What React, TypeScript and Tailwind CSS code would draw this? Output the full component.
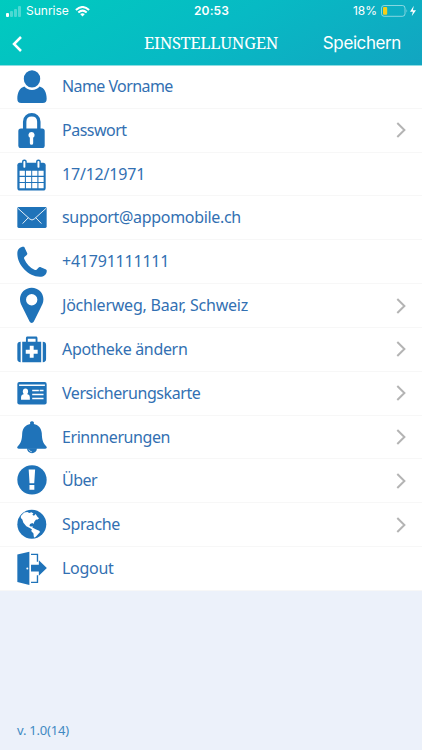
import React from 'react';

interface IconProps {
  children: React.ReactNode;
}

interface SettingsRow {
  label: string;
  icon: React.ReactNode;
  textClass: string;
  hasArrow?: boolean;
}

const RowIcon: React.FC<IconProps> = ({ children }) => (
  <svg viewBox="0 0 32 43.83" className="h-full w-8 shrink-0 fill-[#1f73b9]" aria-hidden="true">
    {children}
  </svg>
);

const rows: SettingsRow[] = [
  {
    label: 'Name Vorname',
    textClass: 'tracking-[-0.58px]',
    icon: (
      <>
        <path d="M8.2 22C10.2 24.4 12.8 25.5 16 25.5S21.8 24.4 23.8 22C28.6 23.3 31 28.3 31 34.6C31 37.8 29.8 39 27 39H5C2.2 39 1 37.8 1 34.6C1 28.3 3.4 23.3 8.2 22Z" />
        <ellipse cx="16" cy="14.6" rx="9" ry="9.4" fill="#fff" />
        <ellipse cx="16" cy="14.2" rx="8.4" ry="8.8" />
      </>
    ),
  },
  {
    label: 'Passwort',
    textClass: 'tracking-[-0.5px]',
    hasArrow: true,
    icon: (
      <>
        <path d="M8.5 21V13C8.5 3.5 23 3.5 23 13V21" fill="none" stroke="#1f73b9" strokeWidth="3.5" />
        <rect x="2" y="20" width="27" height="20" rx="2.6" />
        <path d="M15.5 23.6a3.2 3.2 0 0 1 1.7 5.9V35a1.7 1.7 0 0 1-3.4 0v-5.5a3.2 3.2 0 0 1 1.7-5.9Z" fill="#fff" />
      </>
    ),
  },
  {
    label: '17/12/1971',
    textClass: 'tracking-[-0.2px]',
    icon: (
      <>
        <rect x="1" y="10" width="29" height="28.5" rx="2.6" />
        <path
          d="M3.3 18.2h5.4v5.2H3.3zM9.8 18.2h5.4v5.2H9.8zM16.2 18.2h5.3v5.2h-5.3zM22.6 18.2h5.3v5.2h-5.3zM3.3 24.5h5.4v5.2H3.3zM9.8 24.5h5.4v5.2H9.8zM16.2 24.5h5.3v5.2h-5.3zM22.6 24.5h5.3v5.2h-5.3zM3.3 30.8h5.4v5.2H3.3zM9.8 30.8h5.4v5.2H9.8zM16.2 30.8h5.3v5.2h-5.3zM22.6 30.8h5.3v5.2h-5.3z"
          fill="#fff"
        />
        <rect x="5.8" y="6.6" width="4.8" height="9" rx="2.2" />
        <rect x="20.2" y="6.6" width="4.8" height="9" rx="2.2" />
        <rect x="7.2" y="8.3" width="2" height="6.8" rx="0.8" fill="#fff" />
        <rect x="21.6" y="8.3" width="2" height="6.8" rx="0.8" fill="#fff" />
      </>
    ),
  },
  {
    label: 'support@appomobile.ch',
    textClass: 'tracking-[-0.32px]',
    icon: (
      <>
        <rect x="1" y="11.3" width="30" height="21.4" rx="1.4" />
        <path
          d="M1.6 12.6 13.8 23.6Q16 25.5 18.2 23.6L30.4 12.6M6.4 28.2 12.2 22.2M25.6 28.2 19.8 22.2"
          fill="none"
          stroke="#fff"
          strokeWidth="0.9"
        />
      </>
    ),
  },
  {
    label: '+41791111111',
    textClass: 'tracking-[-0.22px]',
    icon: (
      <path d="M2.6 9C4.1 7.6 5.8 7 7 7C8 7 8.3 7.5 8.7 8.5L11 13.2C11.5 14.3 11.2 15 10.3 15.7L8.5 17.1C7.8 17.8 7.7 18.4 8.1 19.4C10.3 24.6 14 28.2 18.5 30.4C19.5 30.9 20.2 30.8 20.9 30.1L22.6 28.3C23.3 27.5 24 27.3 25 27.8L29.8 30C30.8 30.5 31.2 31 31.1 31.9C30.9 35.3 28.1 37.6 24.1 37.6C12.4 37.4 1 25.6 1 14.1C1 12 1.3 10.4 2.6 9Z" />
    ),
  },
  {
    label: 'Jöchlerweg, Baar, Schweiz',
    textClass: 'tracking-[-0.23px]',
    hasArrow: true,
    icon: (
      <path
        fillRule="evenodd"
        d="M15.7 3.8C22.4 3.8 27.7 9 27.7 15.6C27.7 19 26.2 21.7 24.5 25L18 38.2C16.9 40.4 14.5 40.4 13.4 38.2L6.9 25C5.2 21.7 3.7 19 3.7 15.6C3.7 9 9 3.8 15.7 3.8ZM15.7 10.3A5.8 5.8 0 1 0 15.7 21.9A5.8 5.8 0 1 0 15.7 10.3Z"
      />
    ),
  },
  {
    label: 'Apotheke ändern',
    textClass: 'tracking-[-0.33px]',
    hasArrow: true,
    icon: (
      <>
        <path d="M4.4 14V35C2 35 1 34 1 31.8V17.2C1 15 2 14 4.4 14ZM27 14C29.3 14 30.4 15 30.4 17.2V31.8C30.4 34 29.3 35 27 35Z" />
        <path
          fillRule="evenodd"
          d="M6 14H9.8V10.4C9.8 9.4 10.4 8.8 11.4 8.8H20C21 8.8 21.6 9.4 21.6 10.4V14H25.4V35H6ZM11.7 11V14H19.7V11Z"
        />
        <path d="M13.7 18.2h4v4.1h4.1v4h-4.1v4.1h-4v-4.1H9.6v-4h4.1z" fill="#fff" />
      </>
    ),
  },
  {
    label: 'Versicherungskarte',
    textClass: 'tracking-[-0.43px]',
    hasArrow: true,
    icon: (
      <>
        <rect x="1" y="10.2" width="30" height="23" rx="2" />
        <g fill="#fff">
          <rect x="2.8" y="12.8" width="26.4" height="1.5" />
          <ellipse cx="9.3" cy="19.9" rx="2.7" ry="3.1" />
          <path d="M4.8 28.4V26.2C4.8 24 6 23 7.8 22.6H10.8C12.6 23 13.8 24 13.8 26.2V28.4Z" />
          <path d="M16.2 18.2H23v1.5H16.2zM23.8 18.2H27.8v1.5H23.8zM16.2 22.2H27.8v1.5H16.2zM16.2 26.3H27.8v1.5H16.2z" />
        </g>
      </>
    ),
  },
  {
    label: 'Erinnnerungen',
    textClass: 'tracking-[-0.42px]',
    hasArrow: true,
    icon: (
      <>
        <path d="M16 5.3A1.9 1.9 0 0 1 17.8 8.1C22.5 9 25.6 12.5 26 17.5C26.3 24.5 27 27.4 30.3 30.7C31.9 32.2 31.2 33.4 29.3 33.4H2.7C.8 33.4 .1 32.2 1.7 30.7C5 27.4 5.7 24.5 6 17.5C6.4 12.5 9.5 9 14.2 8.1A1.9 1.9 0 0 1 16 5.3Z" />
        <path d="M10.9 33A5.1 5.1 0 0 0 21.1 33Z" />
        <path d="M12.7 34.2Q13.5 36.5 16 36.7" fill="none" stroke="#fff" strokeWidth="0.6" />
      </>
    ),
  },
  {
    label: 'Über',
    textClass: 'tracking-[-0.5px]',
    hasArrow: true,
    icon: (
      <>
        <circle cx="16" cy="21.3" r="15" />
        <path d="M12.6 10.7H19.2L18.3 24.7H13.5ZM13.4 26.6H18.4V31.4H13.4Z" fill="#fff" />
      </>
    ),
  },
  {
    label: 'Sprache',
    textClass: 'tracking-[-0.35px]',
    hasArrow: true,
    icon: (
      <>
        <circle cx="15.8" cy="21.7" r="14.8" />
        <path
          d="M4.6 13.3L8 9.7L11.3 9.2L13.2 10.2L15.4 9.5L17.5 10.8L16.3 12L18 13L19.7 11.3L21.7 14.2L23.3 15.5L21.3 17.1L20.2 17L18.4 19.2L17.6 21.4L16.4 20.5L14 21.4L13.4 23.3L15 24.3L16.6 23.5L16.4 25.2L18.3 26.2L20.2 27L23.4 28.3L24.2 29.7L22.2 32L20.6 33.7L18.7 35.5L17.8 34.2L17.5 31.2L15.2 28.6L15.9 26.8L13.7 25.6L10.2 23.7L7.2 20.3L6.1 16.9L4.6 15.4Z"
          fill="#fff"
        />
      </>
    ),
  },
  {
    label: 'Logout',
    textClass: 'tracking-[-0.3px]',
    icon: (
      <>
        <path d="M1 7.8 13.3 4.9V38.9L1 35.9Z" />
        <circle cx="11.2" cy="22" r="1" fill="#fff" />
        <path d="M15 7.6H21.6V15M21.6 29V36.2H15" fill="none" stroke="#1f73b9" strokeWidth="1.4" />
        <path d="M15 18.1H23V13.6L31.2 21.6L23 29.5V25.2H15Z" />
      </>
    ),
  },
];

const StatusBar = () => (
  <div className="flex h-[22px] items-center text-xs text-white">
    <div className="flex flex-1 items-center pl-1.5">
      <div className="mr-[5px] flex h-[11px] items-end gap-px">
        <span className="h-1 w-[3px] rounded-[1px] bg-white" />
        <span className="h-1.5 w-[3px] rounded-[1px] bg-white/30" />
        <span className="h-2 w-[3px] rounded-[1px] bg-white/30" />
        <span className="h-[11px] w-[3px] rounded-[1px] bg-white/30" />
      </div>
      <span>Sunrise</span>
      <svg viewBox="0 0 15 11" className="ml-1.5 h-[11px] w-[15px]" fill="none" stroke="#fff" strokeWidth="2">
        <path d="M.9 4Q7.5-2 14.1 4M3.3 6.5Q7.5 2.8 11.7 6.5" />
        <path d="M5.1 8.1Q7.5 6.2 9.9 8.1L7.5 10.6Z" fill="#fff" stroke="none" />
      </svg>
    </div>
    <span className="text-xs font-semibold tracking-[0.1px]">20:53</span>
    <div className="flex flex-1 items-center justify-end pr-[5px]">
      <span>18%</span>
      <svg viewBox="0 0 36 12" className="ml-1 h-3 w-9">
        <rect x="0.5" y="0.5" width="23.5" height="10.8" rx="2.6" fill="none" stroke="#fff" strokeOpacity="0.5" />
        <rect x="2" y="2" width="4.2" height="7.8" rx="1" fill="#f7ce18" />
        <path d="M25.5 4Q27 5.9 25.5 7.8Z" fill="#fff" fillOpacity="0.5" />
        <path d="M32.8.8 29 6.7H31.9L30.7 11.2 35 5.2H31.9Z" fill="#fff" />
      </svg>
    </div>
  </div>
);

const Header = () => (
  <header className="h-[65px] bg-[linear-gradient(150deg,#00cbbf_0%,#07bac4_50%,#12a5c1_100%)] font-[Inter,sans-serif]">
    <StatusBar />
    <div className="grid h-[43px] grid-cols-[1fr_auto_1fr] items-center text-white">
      <button className="pl-3 text-left" aria-label="Zurück">
        <svg viewBox="0 0 10 16" className="h-4 w-2.5" fill="none" stroke="#fff" strokeWidth="2.5">
          <path d="M9 1 2 8 9 15" />
        </svg>
      </button>
      <h1 className="text-[16.5px] leading-none tracking-[-0.28px] font-['Noto_Serif','DejaVu_Serif',serif]">
        EINSTELLUNGEN
      </h1>
      <button className="pr-[21px] text-right text-[17px] leading-none tracking-[-0.4px]">Speichern</button>
    </div>
  </header>
);

const Chevron = () => (
  <svg viewBox="0 0 10 16" className="mr-4 h-4 w-2.5" fill="none" stroke="#b4b4b4" strokeWidth="2">
    <path d="M1.3 1 8.4 8 1.3 15" />
  </svg>
);

const App: React.FC = () => (
  <div className="flex h-[750px] w-[422px] flex-col overflow-hidden bg-[#ecf1fa] font-['Noto_Sans',sans-serif]">
    <Header />
    <ul className="grid h-[526px] grid-rows-12 bg-white shadow-[inset_0_1px_0_#8fdde2]">
      {rows.map(({ label, icon, textClass, hasArrow }) => (
        <li key={label} className="flex min-h-0 items-center border-b border-[#f7f7f7] pl-4">
          <RowIcon>{icon}</RowIcon>
          <span className="ml-3.5 flex-1 pb-px text-base leading-none whitespace-nowrap text-[#3270b2]">
            <span className={`block ${textClass}`}>{label}</span>
          </span>
          {hasArrow && <Chevron />}
        </li>
      ))}
    </ul>
    <footer className="mt-auto px-[17px] pb-3 text-[13px] leading-4 tracking-[-0.2px] text-[#4189c2]">v. 1.0(14)</footer>
  </div>
);

export default App;
